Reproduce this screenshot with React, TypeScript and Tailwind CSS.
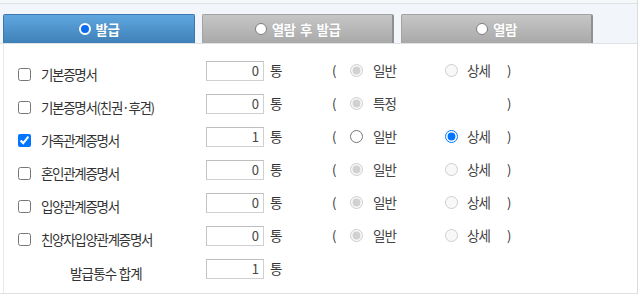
import React from "react";

type Row = {
  label: string;
  checked?: boolean;
  count: string;
  opt1: string;
  opt2?: string;
  enabled?: boolean;
};

const rows: Row[] = [
  { label: "기본증명서", count: "0", opt1: "일반", opt2: "상세" },
  { label: "기본증명서(친권·후견)", count: "0", opt1: "특정" },
  { label: "가족관계증명서", checked: true, count: "1", opt1: "일반", opt2: "상세", enabled: true },
  { label: "혼인관계증명서", count: "0", opt1: "일반", opt2: "상세" },
  { label: "입양관계증명서", count: "0", opt1: "일반", opt2: "상세" },
  { label: "친양자입양관계증명서", count: "0", opt1: "일반", opt2: "상세" },
];

function TabDot({ active }: { active?: boolean }) {
  return active ? (
    <span className="inline-block w-[12px] h-[12px] rounded-full bg-[#0a6cf2] border-2 border-white" />
  ) : (
    <span className="inline-block w-[12px] h-[12px] rounded-full bg-white border border-[#7d7d7d]" />
  );
}

function Tab({ label, active }: { label: string; active?: boolean }) {
  return (
    <div
      className={
        active
          ? "w-[192px] h-[29px] rounded-t-[2px] border border-b-0 border-[#3a78b2] bg-gradient-to-b from-[#5fa7e0] to-[#3f80b8] flex items-center justify-center gap-[5px]"
          : "w-[192px] h-[29px] rounded-t-[2px] border border-b-0 border-[#a3a3a3] border-r-[#8f8f8f] border-r-2 bg-gradient-to-b from-[#c6c6c6] to-[#a9a9a9] flex items-center justify-center gap-[5px]"
      }
    >
      <TabDot active={active} />
      <span className="text-white font-bold text-[13.5px] tracking-[-0.5px] [word-spacing:2px] [text-shadow:0_0_1px_rgba(0,0,0,0.15)]">
        {label}
      </span>
    </div>
  );
}

export default function App() {
  return (
    <div className="w-[643px] h-[296px] bg-white font-['Noto_Sans_CJK_KR','Noto_Sans',sans-serif] text-[#333]">
      <div className="w-[638px] border-r border-[#dcdcdc]">
        <div className="h-[3px] bg-[#f5f7f9]" />
        <div className="border-t border-b border-[#dde2e7] bg-[#f2f6fa] pt-[10px] pl-[3px] flex gap-[7px]">
          <Tab label="발급" active />
          <Tab label="열람 후 발급" />
          <Tab label="열람" />
        </div>
        <div className="border-b border-[#dfe1e4]">
          <div className="ml-[3px] border-l border-[#e3e9ef] h-[249px] pt-[10px]">
            {rows.map((r, i) => (
              <div key={i} className="h-[33px] flex items-center">
                <div className="w-[202px] flex items-center pl-[14px] pt-[7px] shrink-0">
                  <input
                    type="checkbox"
                    defaultChecked={r.checked}
                    className="m-0 w-[13px] h-[13px]"
                  />
                  <span className="ml-[10px] text-[13.5px] tracking-[-1.3px] text-[#333]">{r.label}</span>
                </div>
                <input
                  type="text"
                  readOnly
                  value={r.count}
                  className="w-[58px] h-[20px] border border-[#d0d0d0] border-t-[#bdbdbd] border-l-[#c4c4c4] text-right pr-[4px] text-[13px] text-[#444] bg-white outline-none shrink-0"
                />
                <span className="ml-[6px] w-[62px] text-[13.5px] shrink-0">통</span>
                <span className="w-[18px] text-[13px] shrink-0">(</span>
                <div className="w-[95px] flex items-center shrink-0">
                  <input
                    type="radio"
                    name={"r" + i}
                    defaultChecked={!r.enabled}
                    disabled={!r.enabled}
                    className="m-0 w-[13px] h-[13px]"
                  />
                  <span className="ml-[10px] text-[13.5px] tracking-[-1px] text-[#444]">{r.opt1}</span>
                </div>
                <div className="w-[62px] flex items-center shrink-0">
                  {r.opt2 && (
                    <>
                      <input
                        type="radio"
                        name={"r" + i}
                        defaultChecked={!!r.enabled}
                        disabled={!r.enabled}
                        className="m-0 w-[13px] h-[13px]"
                      />
                      <span className="ml-[9px] text-[13.5px] tracking-[-1px] text-[#444]">{r.opt2}</span>
                    </>
                  )}
                </div>
                <span className="text-[13px]">)</span>
              </div>
            ))}
            <div className="h-[33px] flex items-center">
              <div className="w-[202px] pl-[66px] pt-[6px] shrink-0">
                <span className="text-[13.5px] tracking-[-0.8px] text-[#333]">발급통수 합계</span>
              </div>
              <input
                type="text"
                readOnly
                value="1"
                className="w-[58px] h-[20px] border border-[#d0d0d0] border-t-[#bdbdbd] border-l-[#c4c4c4] text-right pr-[4px] text-[13px] text-[#444] bg-white outline-none shrink-0"
              />
              <span className="ml-[6px] text-[13.5px]">통</span>
            </div>
          </div>
        </div>
      </div>
    </div>
  );
}
